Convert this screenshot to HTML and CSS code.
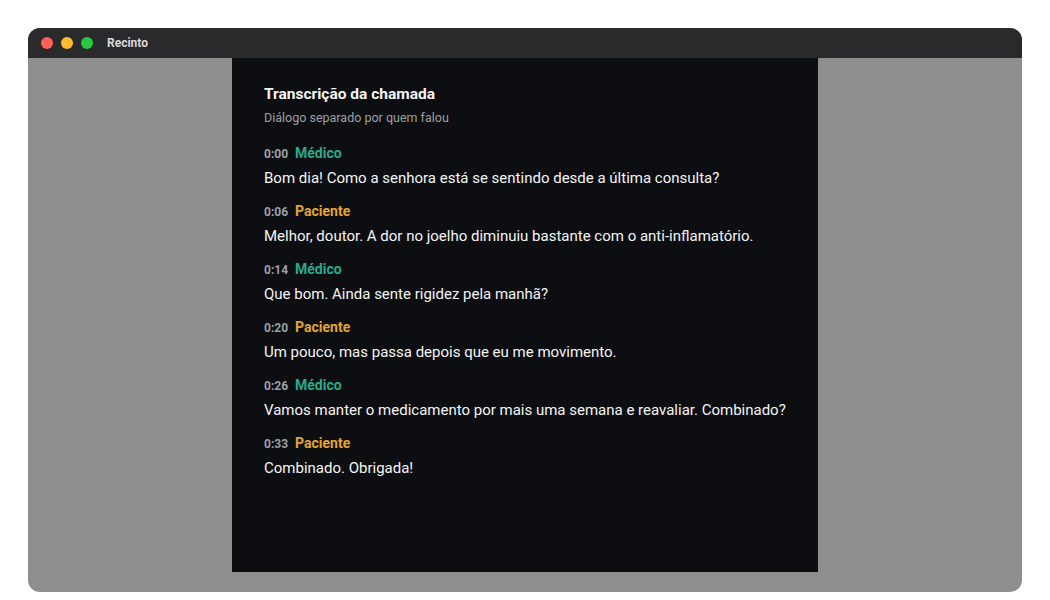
FILE: index.html
```html
<!DOCTYPE html>
<html lang="pt">
<head>
  <meta charset="UTF-8">
  <meta name="viewport" content="width=device-width, initial-scale=1.0">
  <title>Recinto</title>
  <link rel="stylesheet" href="styles.css">
</head>
<body>

  <div class="window">
    <!-- barra de título -->
    <div class="titlebar">
      <span class="dot red"></span>
      <span class="dot yellow"></span>
      <span class="dot green"></span>
      <span class="app-name">Recinto</span>
    </div>

    <div class="stage">
      <div class="panel">
        <h2>Transcrição da chamada</h2>
        <p class="subtitle">Diálogo separado por quem falou</p>

        <div class="turn">
          <div class="meta"><span class="time">0:00</span><span class="who medico">Médico</span></div>
          <p>Bom dia! Como a senhora está se sentindo desde a última consulta?</p>
        </div>
        <div class="turn">
          <div class="meta"><span class="time">0:06</span><span class="who paciente">Paciente</span></div>
          <p>Melhor, doutor. A dor no joelho diminuiu bastante com o anti-inflamatório.</p>
        </div>
        <div class="turn">
          <div class="meta"><span class="time">0:14</span><span class="who medico">Médico</span></div>
          <p>Que bom. Ainda sente rigidez pela manhã?</p>
        </div>
        <div class="turn">
          <div class="meta"><span class="time">0:20</span><span class="who paciente">Paciente</span></div>
          <p>Um pouco, mas passa depois que eu me movimento.</p>
        </div>
        <div class="turn">
          <div class="meta"><span class="time">0:26</span><span class="who medico">Médico</span></div>
          <p>Vamos manter o medicamento por mais uma semana e reavaliar. Combinado?</p>
        </div>
        <div class="turn">
          <div class="meta"><span class="time">0:33</span><span class="who paciente">Paciente</span></div>
          <p>Combinado. Obrigada!</p>
        </div>
      </div>
    </div>
  </div>

</body>
</html>
```

FILE: styles.css
```css
body {
  margin: 0;
  padding: 28px;
  background: #ffffff;
  font-family: 'Roboto', 'Noto Sans', sans-serif;
}

.window {
  width: 994px;
  height: 564px;
  border-radius: 12px;
  overflow: hidden;
  background: #8e8e8e;
  display: flex;
  flex-direction: column;
}

.titlebar {
  height: 30px;
  background: #2a2a2c;
  display: flex;
  align-items: center;
  padding-left: 13px;
  gap: 8px;
  flex-shrink: 0;
}

.dot {
  width: 12px;
  height: 12px;
  border-radius: 50%;
}

.red { background: #fe5f57; }
.yellow { background: #febc2e; }
.green { background: #28c840; }

.app-name {
  margin-left: 6px;
  color: #d8d8d8;
  font-size: 12px;
  font-weight: 700;
}

.stage {
  flex: 1;
  display: flex;
  justify-content: center;
}

.panel {
  width: 586px;
  height: 514px;
  box-sizing: border-box;
  background: #0d0e11;
  padding: 27px 32px;
  color: #f2f2f2;
}

.panel h2 {
  margin: 0;
  font-size: 15.5px;
  font-weight: 700;
  line-height: 18px;
  color: #f4f4f4;
}

.subtitle {
  margin: 7px 0 0;
  font-size: 12.5px;
  line-height: 16px;
  color: #9aa0a6;
}

.turn {
  margin-top: 19px;
}

.turn + .turn {
  margin-top: 13px;
}

.meta {
  display: flex;
  align-items: baseline;
  gap: 7px;
  height: 18px;
}

.time {
  font-size: 12px;
  font-weight: 700;
  color: #9aa0a6;
}

.who {
  font-size: 14px;
  font-weight: 700;
}

.medico { color: #2aa98c; }
.paciente { color: #e3a533; }

.turn p {
  margin: 4px 0 0;
  font-size: 15px;
  line-height: 23px;
  color: #f4f4f4;
}
```
